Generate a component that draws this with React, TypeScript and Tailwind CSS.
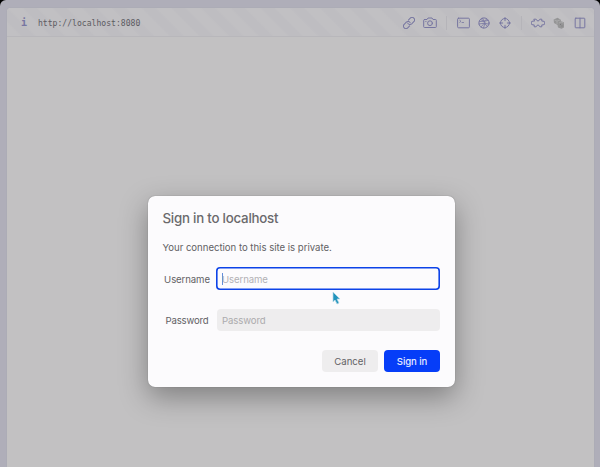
import type { ReactNode } from "react";

function Icon({ children, w = 12, h = 12 }: { children: ReactNode; w?: number; h?: number }) {
  return (
    <svg
      width={w}
      height={h}
      viewBox={`0 0 ${w} ${h}`}
      fill="none"
      stroke="currentColor"
      strokeWidth="1"
      strokeLinecap="round"
      strokeLinejoin="round"
      className="shrink-0"
    >
      {children}
    </svg>
  );
}

function Toolbar() {
  return (
    <header className="flex h-[29px] shrink-0 items-center border-b border-[#b8b7bb] bg-[#c1c0c3] bg-[repeating-linear-gradient(45deg,#c1c0c3_0px,#c1c0c3_9px,#bebdc1_11px,#bebdc1_19px,#c1c0c3_21px)] pr-[8px] pl-[14px] text-[#7776a1]">
      <span className="w-[6px] pt-[2px] font-['DejaVu_Sans_Mono',monospace] text-[10px] leading-none font-bold">i</span>
      <span className="ml-[11px] pt-[2px] font-['DejaVu_Sans_Mono',monospace] text-[8.1px] leading-none text-[#5c5b61]">
        http://localhost:8080
      </span>
      <div className="ml-auto flex items-center pt-px">
        <Icon w={12} h={12}>
          <g transform="rotate(-45 6 6)">
            <path d="M4.400 8.500H1.700a2.500 2.500 0 0 1 0-5h3a2.500 2.500 0 0 1 2.300 3.300" />
            <path d="M7.600 3.500h2.700a2.500 2.500 0 0 1 0 5h-3a2.500 2.500 0 0 1-2.300-3.300" />
          </g>
        </Icon>
        <span className="w-[8px]" />
        <Icon w={14} h={12}>
          <path d="M1.500 2.500H4L5 1h4l1 1.500h2.500a.8.8 0 0 1 .8.8v6.400a.8.8 0 0 1-.8.8h-11a.8.8 0 0 1-.8-.8V3.300a.8.8 0 0 1 .8-.8Z" />
          <circle cx="7" cy="6.200" r="2.400" />
          <path d="M2.800 4.500h.2" />
        </Icon>
        <span className="mr-[10px] ml-[9px] h-[14px] w-px bg-[#b5b4b9]" />
        <Icon w={13} h={12}>
          <rect x=".6" y="1.200" width="11.800" height="9.600" rx="1" />
          <path d="m2.700 3.300 1.300 1-1.300 1M5 5.500h1.600" strokeWidth=".8" />
        </Icon>
        <span className="w-[8px]" />
        <Icon w={12} h={12}>
          <circle cx="6" cy="6" r="5.100" />
          <path d="M4.500 1.200 7 6l-1.500 5M1.500 4.500 6.300 4.300l4-1M1 7l5.500-.8 4.400 1M3 10l3.500-4M8.800 2 6.300 4.300M9.500 9.800 6.500 6.200M2.500 2.500l3.800 1.800" strokeWidth=".8" />
        </Icon>
        <span className="w-[9px]" />
        <Icon w={12} h={12}>
          <circle cx="6" cy="6" r="4.500" />
          <path d="M6 .5v3.200M6 8.300v3.200M.5 6h3.200M8.300 6h3.200" />
        </Icon>
        <span className="mr-[9px] ml-[10px] h-[14px] w-px bg-[#b5b4b9]" />
        <Icon w={14} h={12}>
          <path d="M3.200 2.200H5c.4 0 .6.300.6.600 0 1.500 2.800 1.500 2.800 0 0-.3.200-.6.600-.6h1.800v1.900h1.200a1.900 1.900 0 0 1 0 3.800h-1.200v1.900H9c-.4 0-.6-.3-.6-.6 0-1.500-2.800-1.500-2.800 0 0 .3-.2.600-.6.600H3.200V7.900H2a1.900 1.900 0 0 1 0-3.800h1.200Z" />
        </Icon>
        <span className="w-[8px]" />
        <svg width="12" height="12" viewBox="0 0 12 12" className="shrink-0">
          <path d="m.6 2.500 4-1.700 3.200 2 .2 1.500 3 1v5.200l-2.500 1.300L5 10.500 4.500 8 1 6Z" fill="#959596" />
          <path d="M1.500 3 4 4v3M4 4l3-1M6 6l2-1 2.500 1" stroke="#b0b0b1" strokeWidth=".7" fill="none" />
          <path d="M7.500 7v1M9 8.500v1" stroke="#77777b" strokeWidth=".9" />
        </svg>
        <span className="w-[9px]" />
        <Icon w={12} h={12}>
          <rect x="1.200" y="1.200" width="9.600" height="9.600" rx=".6" />
          <path d="M6 1.200v9.600" />
        </Icon>
      </div>
    </header>
  );
}

function SignInDialog() {
  return (
    <form className="relative h-[191px] w-[307px] rounded-[7px] bg-[#fcfbfd] px-[15px] pt-[14px] font-[Inter,sans-serif] text-[9.6px] text-[#626164] shadow-[0_0_1px_#666,0_10px_28px_rgba(0,0,0,0.34)]">
      <h1 className="-ml-[0.5px] h-[16px] text-[13.3px] leading-[16px] font-medium tracking-[-0.23px] whitespace-nowrap text-[#6a696c]">Sign in to localhost</h1>
      <p className="mt-[15px] -ml-[0.5px] h-[13px] leading-[13px] tracking-[-0.02px] whitespace-nowrap">Your connection to this site is private.</p>
      <div className="mt-[13px] flex h-[23px] items-center">
        <label className="w-[48px] pt-[3px] text-center tracking-[-0.1px]">Username</label>
        <div className="ml-[5px] flex h-[23px] w-[224px] items-center rounded-[4px] bg-[#fcfbfd] pt-px pl-[6px] text-[#b2b1b5] shadow-[inset_0_0_0_1.6px_#0d43e8]">
          <span className="h-[12px] w-px bg-[#628ddc]" />
          <span className="-ml-px pt-[2px] tracking-[-0.1px]">Username</span>
        </div>
      </div>
      <div className="mt-[19px] flex h-[22px] items-center">
        <label className="w-[48px] pt-[2px] text-center tracking-[-0.2px]">Password</label>
        <div className="ml-[6px] flex h-[22px] w-[223px] items-center rounded-[4px] bg-[#eeedee] pt-[2px] pl-[5px] tracking-[-0.1px] text-[#acabad]">Password</div>
      </div>
      <div className="mt-[19px] flex gap-[6px] pl-[159px]">
        <button type="button" className="h-[22px] w-[56px] rounded-[4px] bg-[#eeedee] pt-[2px]">Cancel</button>
        <button type="button" className="h-[22px] w-[56px] rounded-[4px] bg-[#063df8] pt-[2px] font-medium tracking-[-0.1px] text-[#e5eaff]">Sign in</button>
      </div>
      <svg className="absolute top-[95px] left-[184px]" width="9" height="15" viewBox="0 0 9 15">
        <path d="M1 1v10l2-2 2 4 2-1-2-4h3Z" fill="#2294bd" stroke="#b9dae6" strokeWidth=".7" />
      </svg>
    </form>
  );
}

export default function App() {
  return (
    <div className="h-[467px] w-[600px] overflow-hidden bg-black">
      <div className="flex h-full flex-col rounded-t-[6px] bg-[#afaeb9] pt-[8px] pr-[6px] pl-[7px]">
        <div className="flex min-h-0 flex-1 flex-col overflow-hidden rounded-t-[4px] bg-[#c2c1c2] shadow-[0_0_1px_#9998a3]">
          <Toolbar />
          <main className="flex-1 pt-[159px] pl-[141px]">
            <SignInDialog />
          </main>
        </div>
      </div>
    </div>
  );
}
